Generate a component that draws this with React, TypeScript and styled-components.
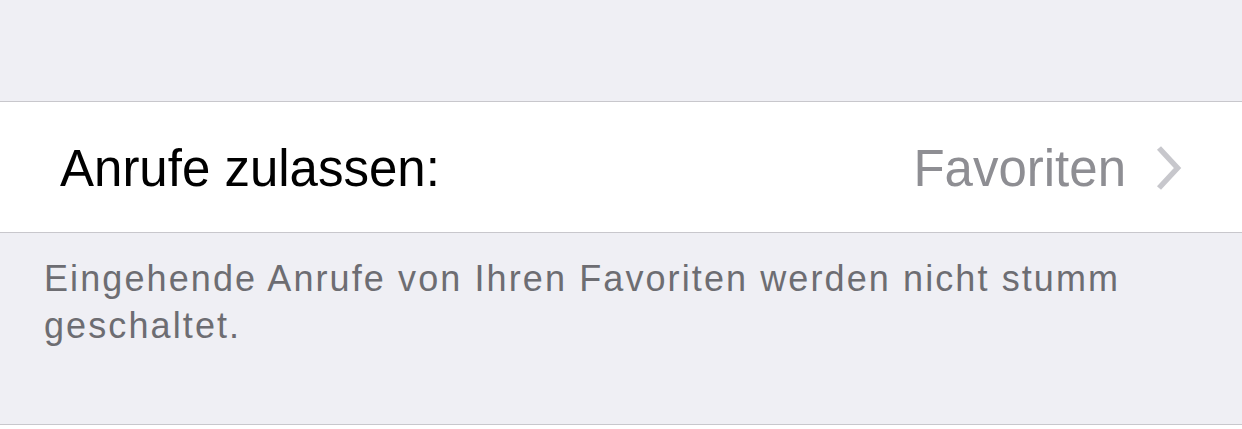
import { FC } from "react";
import styled, { createGlobalStyle } from "styled-components";

const GlobalStyle = createGlobalStyle`
  body {
    margin: 0;
    background: #ffffff;
    font-family: "Liberation Sans", Arial, sans-serif;
  }
`

const Screen = styled.div`
  width: 1242px;
  display: flex;
  flex-direction: column;
`

const GroupSpacer = styled.div`
  height: 101px;
  background-color: #EFEFF4;
  border-bottom: 1px solid #C8C7CC;
`

const Cell = styled.div`
  height: 131px;
  box-sizing: border-box;
  background: #ffffff;
  border-bottom: 1px solid #C8C7CC;
  display: flex;
  align-items: center;
  padding: 3px 60px 0 60px;
`

const CellTitle = styled.div`
  flex: 1;
  font-size: 51px;
  line-height: 51px;
  color: #000000;
`

const CellValue = styled.div`
  font-size: 51px;
  line-height: 51px;
  color: #8E8E93;
  margin-right: 30px;
`

const Chevron = styled.svg`
  display: block;
  margin-top: -2px;
`

const Footer = styled.div`
  height: 192px;
  box-sizing: border-box;
  background-color: #EFEFF4;
  border-bottom: 1px solid #C8C7CC;
  padding: 22px 60px 0 44px;
  font-size: 36px;
  line-height: 47px;
  letter-spacing: 2.1px;
  color: #6D6D72;
`

type RowProps = {
  title: string
  value: string
}

const DisclosureRow: FC<RowProps> = ({ title, value }) => (
  <Cell>
    <CellTitle>{title}</CellTitle>
    <CellValue>{value}</CellValue>
    <Chevron width="26" height="46" viewBox="0 0 26 46">
      <path d="M3 3 L21.5 23 L3 43" fill="none" stroke="#C7C7CC" strokeWidth="5.5" />
    </Chevron>
  </Cell>
)

const App: FC = () => {
  return (
    <Screen>
      <GlobalStyle />
      <GroupSpacer />
      <DisclosureRow title="Anrufe zulassen:" value="Favoriten" />
      <Footer>Eingehende Anrufe von Ihren Favoriten werden nicht stumm geschaltet.</Footer>
    </Screen>
  )
}

export default App;
